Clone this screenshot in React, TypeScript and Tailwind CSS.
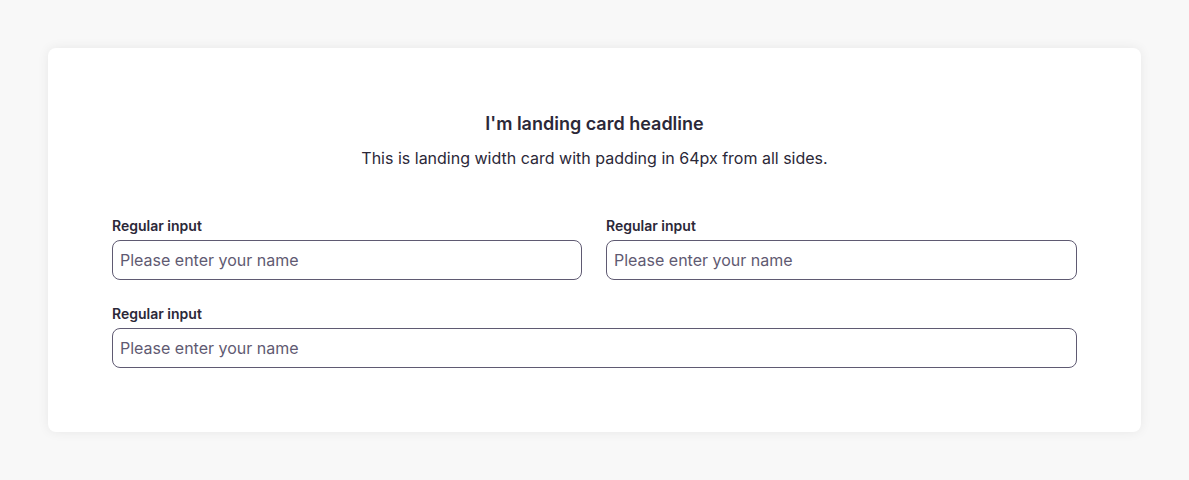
const Field = ({ className = "" }: { className?: string }) => (
  <label className={`flex flex-col gap-1 ${className}`}>
    <span className="text-sm leading-5 font-semibold text-[#2b2838]">Regular input</span>
    <input
      type="text"
      placeholder="Please enter your name"
      className="h-10 w-full rounded-lg border border-[#5f5a72] bg-white pl-[7px] pr-2 text-base text-[#2b2838] placeholder:text-[#5f5a72] outline-none"
    />
  </label>
);

export default function App() {
  return (
    <div className="min-h-[480px] bg-[#f8f8f8] p-12 font-['Inter',sans-serif]">
      <div className="rounded-lg bg-white p-16 shadow-[0_0_12px_rgba(0,0,0,0.07)]">
        <div className="text-center">
          <h1 className="text-lg leading-6 font-semibold text-[#2b2838]">I'm landing card headline</h1>
          <p className="mt-[10px] text-base leading-6 text-[#2b2838]">
            This is landing width card with padding in 64px from all sides.
          </p>
        </div>
        <div className="mt-[46px] grid grid-cols-[470px_1fr] gap-6">
          <Field />
          <Field />
          <Field className="col-span-2" />
        </div>
      </div>
    </div>
  );
}
